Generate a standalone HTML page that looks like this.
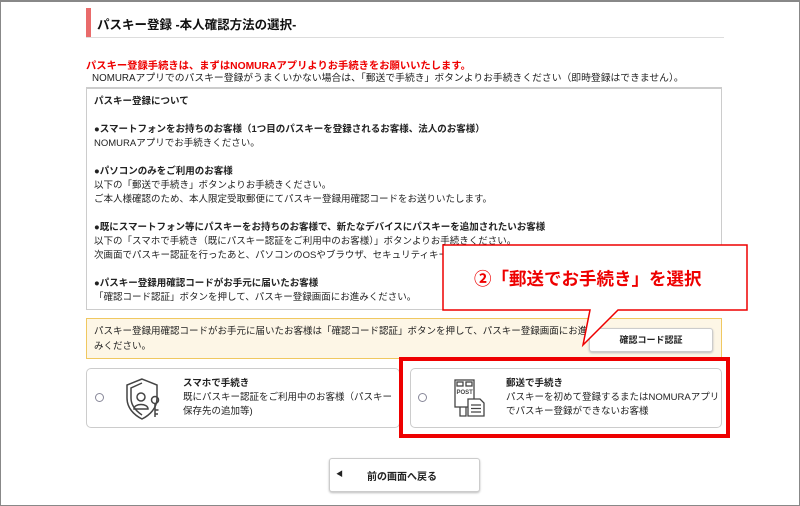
<!DOCTYPE html>
<html><head><meta charset="utf-8"><style>
*{margin:0;padding:0;box-sizing:border-box}
body{width:800px;height:506px;background:#fff;font-family:"Liberation Sans","Noto Sans CJK JP",sans-serif;color:#222;position:relative;overflow:hidden;font-size:10px}
.frame{position:absolute;left:0;top:0;width:800px;height:506px;border:1px solid #888;border-top:2px solid #888}
.abs{position:absolute;white-space:nowrap}
.b{font-weight:bold}
</style></head><body>
<div class="frame"></div>
<div class="abs" style="left:86px;top:8px;width:5px;height:29px;background:#e96b6b"></div>
<div class="abs b" style="left:97px;top:14px;font-size:12.5px;color:#111">パスキー登録 -本人確認方法の選択-</div>
<div class="abs" style="left:86px;top:37px;width:638px;height:1px;background:#ddd"></div>
<div class="abs b" style="left:86px;top:57px;color:#e00;font-size:10.3px">パスキー登録手続きは、まずはNOMURAアプリよりお手続きをお願いいたします。</div>
<div class="abs" style="left:92px;top:70px;font-size:9.8px">NOMURAアプリでのパスキー登録がうまくいかない場合は、「郵送で手続き」ボタンよりお手続きください（即時登録はできません）。</div>
<div class="abs" style="left:86px;top:87px;width:636px;height:223px;border:1px solid #ccc;border-top:2px solid #ccc"></div>
<div class="abs" style="left:94px;top:95px;line-height:14px;font-size:9.5px">
<div class="b">パスキー登録について</div><div>&nbsp;</div>
<div class="b">●スマートフォンをお持ちのお客様（1つ目のパスキーを登録されるお客様、法人のお客様）</div>
<div>NOMURAアプリでお手続きください。</div><div>&nbsp;</div>
<div class="b">●パソコンのみをご利用のお客様</div>
<div>以下の「郵送で手続き」ボタンよりお手続きください。</div>
<div>ご本人様確認のため、本人限定受取郵便にてパスキー登録用確認コードをお送りいたします。</div><div>&nbsp;</div>
<div class="b">●既にスマートフォン等にパスキーをお持ちのお客様で、新たなデバイスにパスキーを追加されたいお客様</div>
<div>以下の「スマホで手続き（既にパスキー認証をご利用中のお客様）」ボタンよりお手続きください。</div>
<div>次画面でパスキー認証を行ったあと、パソコンのOSやブラウザ、セキュリティキーの</div><div>&nbsp;</div>
<div class="b">●パスキー登録用確認コードがお手元に届いたお客様</div>
<div>「確認コード認証」ボタンを押して、パスキー登録画面にお進みください。</div>
</div>
<div class="abs" style="left:86px;top:318px;width:636px;height:41px;background:#fdf6e6;border:1px solid #f0c860"></div>
<div class="abs" style="left:94px;top:324px;line-height:15px;font-size:9.5px">パスキー登録用確認コードがお手元に届いたお客様は「確認コード認証」ボタンを押して、パスキー登録画面にお進<br>みください。</div>
<div class="abs b" style="left:589px;top:328px;width:124px;height:24px;border:1px solid #ccc;border-radius:3px;background:#fff;box-shadow:0 1px 2px #bbb;text-align:center;line-height:22px;font-size:9px">確認コード認証</div>
<!-- cards -->
<div class="abs" style="left:86px;top:368px;width:314px;height:60px;border:1px solid #ccc;border-radius:5px;background:#fff"></div>
<div class="abs" style="left:95px;top:393px;width:9px;height:9px;border:1px solid #889;border-radius:50%"></div>
<svg class="abs" style="left:122px;top:377px" width="46" height="44" viewBox="0 0 46 44" fill="none" stroke="#444" stroke-width="1.5"><path d="M20 2 L5 8 V21 C5 31 12 38 20 42 C28 38 35 31 35 21 V8 Z"/><path d="M20 6 L9 11 V21 C9 29 14 34 20 38"/><circle cx="19" cy="20" r="4"/><path d="M12 32 C12 26 26 26 26 32 Z"/><circle cx="33" cy="23" r="3.5"/><path d="M33 26.5 V40 M33 33 H36.5 M33 37 H36"/></svg>
<div class="abs" style="left:183px;top:377px;line-height:14px;font-size:9.5px"><div class="b">スマホで手続き</div><div>既にパスキー認証をご利用中のお客様（パスキー</div><div>保存先の追加等)</div></div>
<div class="abs" style="left:410px;top:368px;width:312px;height:60px;border:1px solid #ccc;border-radius:5px;background:#fff"></div>
<div class="abs" style="left:418px;top:393px;width:9px;height:9px;border:1px solid #889;border-radius:50%"></div>
<svg class="abs" style="left:453px;top:379px" width="34" height="40" viewBox="0 0 34 40" fill="none" stroke="#444" stroke-width="1.3"><rect x="2" y="1" width="19" height="27"/><rect x="4" y="3" width="6" height="4"/><rect x="13" y="3" width="6" height="4"/><text x="3.5" y="15" font-size="6" font-weight="bold" fill="#444" stroke="none" font-family="Liberation Sans">POST</text><path d="M7 28 V37 H13 V28"/><path d="M15 20 H27 L31 24 V37 H15 Z" fill="#fff"/><path d="M18 26 H28 M18 29.5 H28 M18 33 H28"/></svg>
<div class="abs" style="left:506px;top:377px;line-height:14px;font-size:9.5px"><div class="b">郵送で手続き</div><div>パスキーを初めて登録するまたはNOMURAアプリ</div><div>でパスキー登録ができないお客様</div></div>
<div class="abs" style="left:399px;top:357px;width:331px;height:81px;border:4px solid #e00"></div>
<!-- callout -->
<svg class="abs" style="left:440px;top:243px" width="310" height="105" viewBox="0 0 310 105"><path d="M3 2 H307 V67 H178 L143 102 L150 67 H3 Z" fill="#fff" stroke="#e00" stroke-width="1.5"/></svg>
<div class="abs b" style="left:474px;top:266px;color:#e00;font-size:17.5px">②「郵送でお手続き」を選択</div>
<!-- back -->
<div class="abs" style="left:329px;top:458px;width:151px;height:34px;border:1px solid #ccc;border-radius:3px;box-shadow:0 1px 2px #bbb;background:#fff"></div>
<div class="abs" style="left:336px;top:469px;font-size:7px">◀</div>
<div class="abs b" style="left:367px;top:468px;font-size:10px">前の画面へ戻る</div>
</body></html>
